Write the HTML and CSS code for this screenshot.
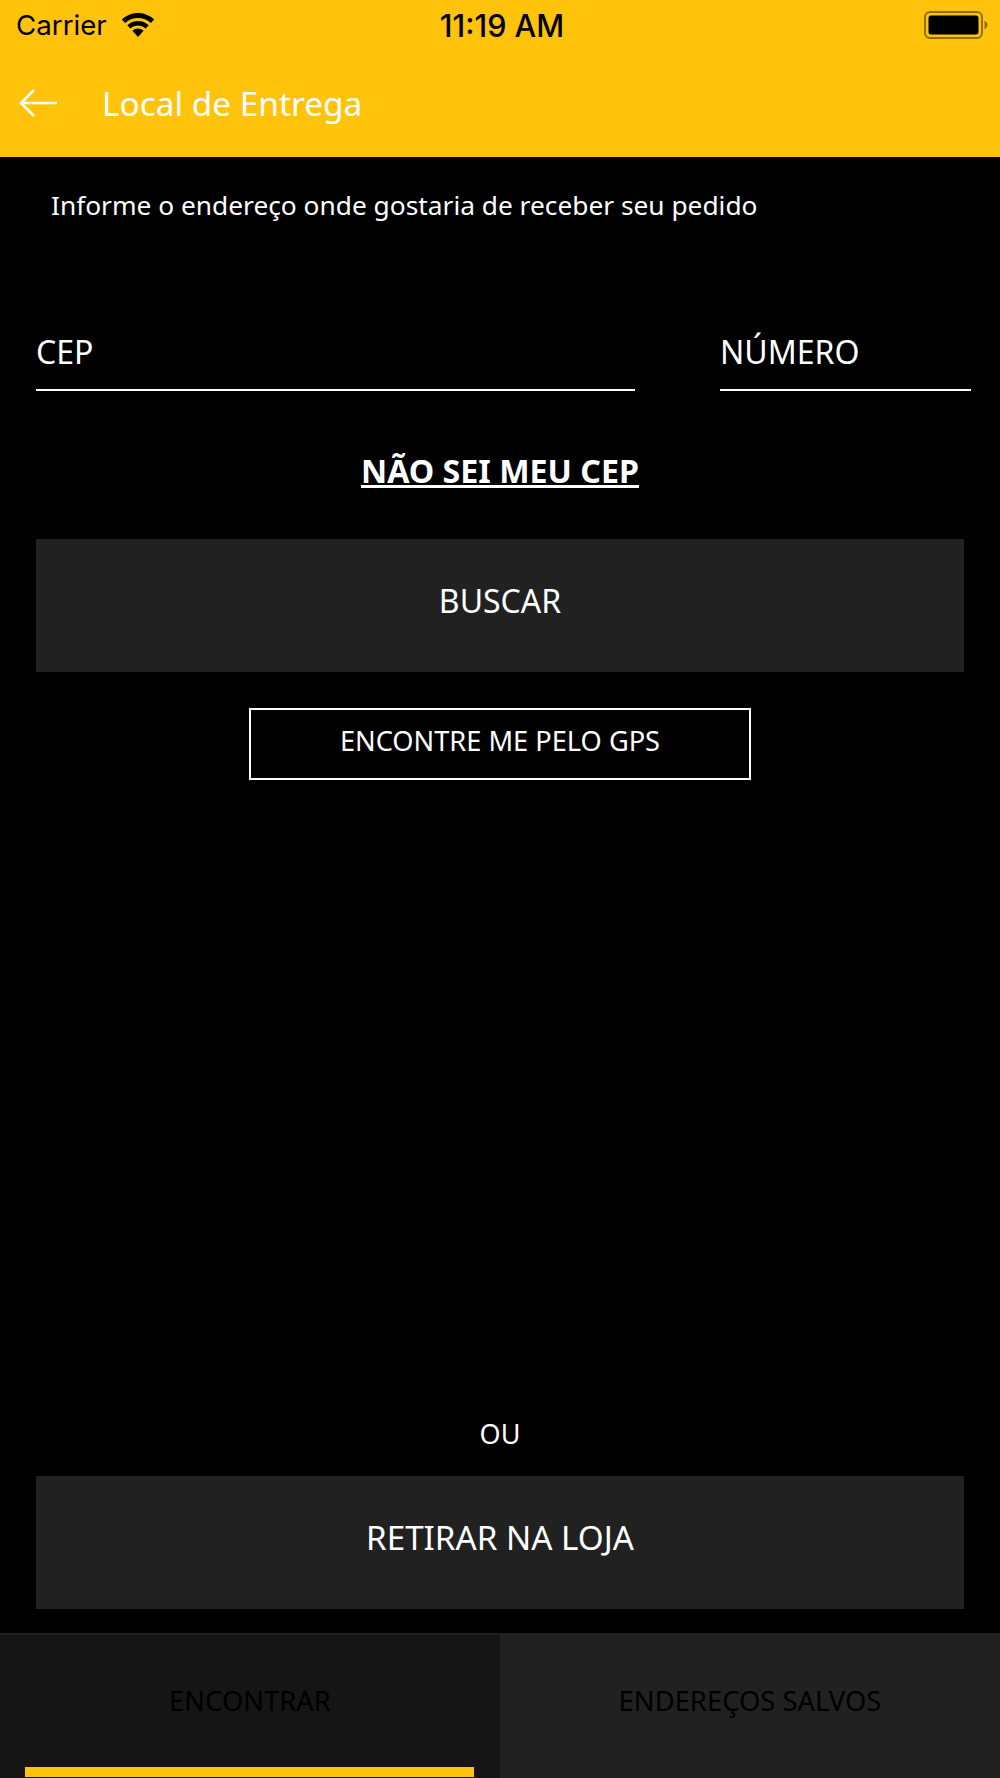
FILE: index.html
```html
<!DOCTYPE html>
<html lang="pt-BR">
<head>
    <meta charset="UTF-8">
    <meta name="viewport" content="width=device-width, initial-scale=1.0">
    <title>Local de Entrega</title>
    <link rel="stylesheet" href="styles.css">
</head>
<body>
<div class="app">

    <!-- topo amarelo -->
    <div class="header">
        <div class="status-bar">
            <div class="status-side">
                <span class="carrier">Carrier</span>
                <svg class="wifi" width="34" height="24" viewBox="0 0 34 24">
                    <path d="M17 24l-5.600-6.200a8 8 0 0 1 11.200 0z"/>
                    <path d="M9.300 15.600l-3-3.300a15.600 15.600 0 0 1 21.400 0l-3 3.300a11.200 11.200 0 0 0-15.400 0z"/>
                    <path d="M4.200 10L.8 6.400a23.600 23.600 0 0 1 32.400 0L29.800 10a18.800 18.800 0 0 0-25.600 0z"/>
                </svg>
            </div>
            <span class="clock">11:19 AM</span>
            <div class="status-side status-right">
                <svg class="battery" width="64" height="28" viewBox="0 0 64 28">
                    <rect x="1" y="1" width="57" height="26" rx="5" fill="none" stroke="#8f7008" stroke-width="2"/>
                    <rect x="4.500" y="4.500" width="50" height="19" rx="2.500" fill="#000"/>
                    <path d="M60.500 10c2 .4 3 2 3 4s-1 3.600-3 4z" fill="#8f7008"/>
                </svg>
            </div>
        </div>
        <div class="nav-bar">
            <svg class="back" width="38" height="30" viewBox="0 0 38 30">
                <path d="M38 15H2M15 2L2 15l13 13" fill="none" stroke="#fff" stroke-width="2.500"/>
            </svg>
            <span class="nav-title">Local de Entrega</span>
        </div>
    </div>

    <!-- conteudo -->
    <div class="content">
        <p class="intro">Informe o endereço onde gostaria de receber seu pedido</p>

        <div class="fields">
            <div class="field field-cep">CEP</div>
            <div class="field field-num">NÚMERO</div>
        </div>

        <a class="cep-link">NÃO SEI MEU CEP</a>

        <div class="btn btn-search">BUSCAR</div>
        <div class="btn-gps">ENCONTRE ME PELO GPS</div>

        <div class="bottom">
            <div class="or">OU</div>
            <div class="btn btn-store">RETIRAR NA LOJA</div>
        </div>
    </div>

    <!-- abas -->
    <div class="tabs">
        <div class="tab tab-active">
            <span>ENCONTRAR</span>
            <div class="tab-mark"></div>
        </div>
        <div class="tab">
            <span>ENDEREÇOS SALVOS</span>
        </div>
    </div>

</div>
</body>
</html>
```

FILE: styles.css
```css
* {
    box-sizing: border-box;
}

body {
    margin: 0;
    background-color: #000;
    color: #fff;
    font-family: "Noto Sans", sans-serif;
}

.app {
    display: flex;
    flex-direction: column;
    width: 1000px;
    height: 1778px;
}

/* topo */
.header {
    height: 157px;
    background-color: #ffc30b;
}

.status-bar {
    display: flex;
    align-items: center;
    height: 50px;
    padding: 0 12px 0 16px;
    color: #000;
    font-family: "Inter", sans-serif;
}

.status-side {
    display: flex;
    flex: 1;
    align-items: center;
    gap: 14px;
}

.status-right {
    justify-content: flex-end;
}

.carrier {
    font-size: 27.700px;
}

.clock {
    font-size: 30.600px;
    font-weight: 500;
}

.nav-bar {
    display: flex;
    align-items: center;
    height: 107px;
    padding: 0 0 2px 19px;
}

.back {
    margin-right: 45px;
}

.nav-title {
    font-size: 33.400px;
    color: #fff;
}

/* conteudo */
.content {
    display: flex;
    flex: 1;
    flex-direction: column;
    padding: 0 36px;
}

.intro {
    margin: 0;
    padding: 25px 0 0 15px;
    font-size: 26.300px;
    line-height: 46px;
}

.fields {
    display: flex;
    justify-content: space-between;
    margin-top: 93px;
    margin-right: -7px;
}

.field {
    height: 70px;
    padding-top: 9px;
    border-bottom: 2px solid #fff;
    font-size: 32px;
    line-height: 44px;
}

.field-cep {
    width: 599px;
}

.field-num {
    width: 251px;
}

.cep-link {
    align-self: center;
    margin-top: 60px;
    font-size: 32.200px;
    font-weight: 700;
    line-height: 40px;
    text-decoration: underline;
}

.btn {
    height: 133px;
    background-color: #212121;
    font-size: 32px;
    line-height: 44px;
    text-align: center;
}

.btn-search {
    margin-top: 48px;
    padding-top: 40px;
}

.btn-store {
    padding-top: 40px;
    font-size: 33.200px;
}

.btn-gps {
    align-self: center;
    width: 502px;
    height: 72px;
    margin-top: 36px;
    border: 2px solid #fff;
    font-size: 27.200px;
    line-height: 62px;
    text-align: center;
}

.bottom {
    margin-top: auto;
    padding-bottom: 24px;
}

.or {
    margin-bottom: 22px;
    font-size: 27px;
    line-height: 40px;
    text-align: center;
}

/* abas */
.tabs {
    display: flex;
    height: 145px;
    background-color: #212121;
}

.tab {
    display: flex;
    flex: 1;
    flex-direction: column;
    padding-top: 48px;
    color: #000;
    font-size: 27.400px;
    line-height: 40px;
    text-align: center;
}

.tab-active {
    margin-top: 2px;
    padding-top: 46px;
    background-color: #151515;
}

.tab-mark {
    width: 449px;
    height: 10px;
    margin: auto 0 1px 25px;
    background-color: #ffc30b;
}
```
